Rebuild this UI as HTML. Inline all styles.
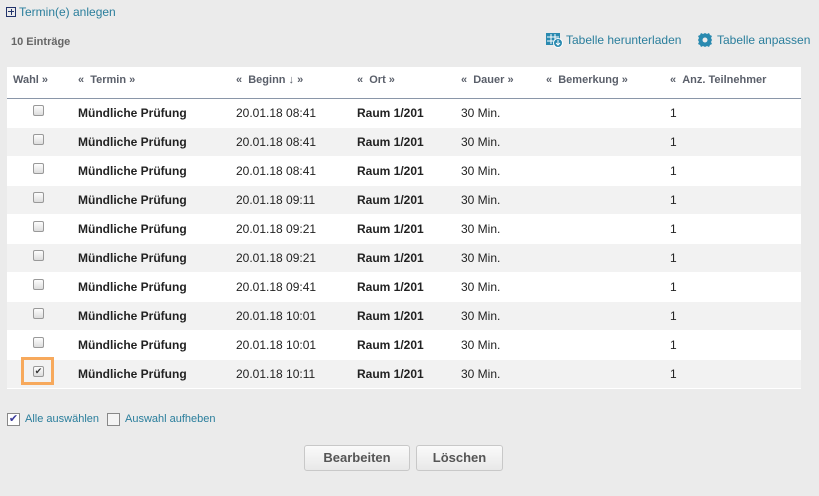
<!DOCTYPE html>
<html><head><meta charset="utf-8"><style>
*{margin:0;padding:0;box-sizing:border-box}
body{width:819px;height:496px;background:#ebebeb;font-family:"Liberation Sans",sans-serif;font-size:12px;color:#222;position:relative;overflow:hidden}
.a{position:absolute;white-space:nowrap}
.link{color:#2a7e9c}
table{position:absolute;left:7px;top:67px;width:794px;border-collapse:collapse;background:#fff;table-layout:fixed}
th{height:31px;text-align:left;font-weight:bold;color:#5a5f6a;font-size:11px;border-bottom:1px solid #8a96a8;padding:0 0 4px 0}
td{height:29px;padding:0;border-bottom:1px solid #fff}
tr.g td{background:#f2f2f2}
.cb{display:inline-block;width:11px;height:11px;border:1px solid #999;border-radius:2px;background:linear-gradient(#fdfdfd,#ddd);vertical-align:middle;position:relative;top:-3px}
.b{font-weight:bold}
.btn{position:absolute;top:445px;height:26px;border:1px solid #c8c8c8;border-radius:3px;background:linear-gradient(#fafafa,#e8e8e8);font-weight:bold;font-size:13px;color:#555;text-align:center;line-height:23px}
</style></head><body>
<div class="a" style="left:6px;top:7px;width:10px;height:10px;border:1px solid #22336b;"></div>
<div class="a" style="left:8px;top:11px;width:6px;height:1px;background:#22336b"></div>
<div class="a" style="left:10.5px;top:9px;width:1px;height:6px;background:#22336b"></div>
<div class="a link" style="left:19px;top:5px">Termin(e) anlegen</div>
<div class="a" style="left:11px;top:36px;font-size:11px;color:#666;font-weight:bold">10 Einträge</div>
<svg class="a" style="left:546px;top:32px" width="17" height="16" viewBox="0 0 17 16"><rect x="0" y="1" width="14" height="12" fill="#2a8ab0"/><path d="M1 5h12M1 9h12M5 2v10M9 2v10" stroke="#fff" stroke-width="1"/><circle cx="12" cy="11" r="4.5" fill="#2a8ab0" stroke="#fff"/><path d="M12 8v5M10 11l2 2 2-2" stroke="#fff" fill="none"/></svg>
<div class="a link" style="left:566px;top:33px">Tabelle herunterladen</div>
<svg class="a" style="left:697px;top:32px" width="16" height="16" viewBox="0 0 16 16"><path d="M8 1l2 1 2-1 1 2 2 1-1 2 1 2-1 2 1 2-2 1-1 2-2-1-2 1-2-1-2 1-1-2-2-1 1-2-1-2 1-2-1-2 2-1 1-2 2 1z" fill="#2a8ab0"/><circle cx="8" cy="8" r="2.5" fill="#ebebeb"/></svg>
<div class="a link" style="left:717px;top:33px">Tabelle anpassen</div>
<table>
<colgroup><col style="width:71px"><col style="width:158px"><col style="width:121px"><col style="width:104px"><col style="width:85px"><col style="width:124px"><col></colgroup>
<tr><th style="padding-left:6px">Wahl »</th><th>« &nbsp;Termin »</th><th>« &nbsp;Beginn ↓ »</th><th>« &nbsp;Ort »</th><th>« &nbsp;Dauer »</th><th>« &nbsp;Bemerkung »</th><th>« &nbsp;Anz. Teilnehmer</th></tr>
<tr><td style="padding-left:26px"><span class="cb"></span></td><td class="b">Mündliche Prüfung</td><td>20.01.18 08:41</td><td class="b">Raum 1/201</td><td>30 Min.</td><td></td><td>1</td></tr>
<tr class="g"><td style="padding-left:26px"><span class="cb"></span></td><td class="b">Mündliche Prüfung</td><td>20.01.18 08:41</td><td class="b">Raum 1/201</td><td>30 Min.</td><td></td><td>1</td></tr>
<tr><td style="padding-left:26px"><span class="cb"></span></td><td class="b">Mündliche Prüfung</td><td>20.01.18 08:41</td><td class="b">Raum 1/201</td><td>30 Min.</td><td></td><td>1</td></tr>
<tr class="g"><td style="padding-left:26px"><span class="cb"></span></td><td class="b">Mündliche Prüfung</td><td>20.01.18 09:11</td><td class="b">Raum 1/201</td><td>30 Min.</td><td></td><td>1</td></tr>
<tr><td style="padding-left:26px"><span class="cb"></span></td><td class="b">Mündliche Prüfung</td><td>20.01.18 09:21</td><td class="b">Raum 1/201</td><td>30 Min.</td><td></td><td>1</td></tr>
<tr class="g"><td style="padding-left:26px"><span class="cb"></span></td><td class="b">Mündliche Prüfung</td><td>20.01.18 09:21</td><td class="b">Raum 1/201</td><td>30 Min.</td><td></td><td>1</td></tr>
<tr><td style="padding-left:26px"><span class="cb"></span></td><td class="b">Mündliche Prüfung</td><td>20.01.18 09:41</td><td class="b">Raum 1/201</td><td>30 Min.</td><td></td><td>1</td></tr>
<tr class="g"><td style="padding-left:26px"><span class="cb"></span></td><td class="b">Mündliche Prüfung</td><td>20.01.18 10:01</td><td class="b">Raum 1/201</td><td>30 Min.</td><td></td><td>1</td></tr>
<tr><td style="padding-left:26px"><span class="cb"></span></td><td class="b">Mündliche Prüfung</td><td>20.01.18 10:01</td><td class="b">Raum 1/201</td><td>30 Min.</td><td></td><td>1</td></tr>
<tr class="g"><td style="padding-left:26px"><span class="cb" style="font-size:9px;line-height:9px;text-align:center;color:#333">✔</span></td><td class="b">Mündliche Prüfung</td><td>20.01.18 10:11</td><td class="b">Raum 1/201</td><td>30 Min.</td><td></td><td>1</td></tr>
</table>
<div class="a" style="left:21px;top:357px;width:33px;height:28px;border:3px solid #f7a95c"></div>
<div class="a" style="left:7px;top:413px;width:13px;height:13px;border:1px solid #888;background:#fff;color:#3a3a9a;font-size:11px;line-height:11px;text-align:center">✔</div>
<div class="a link" style="left:25px;top:413px;font-size:11px">Alle auswählen</div>
<div class="a" style="left:107px;top:413px;width:13px;height:13px;border:1px solid #888;background:#f4f4f4"></div>
<div class="a link" style="left:125px;top:413px;font-size:11px">Auswahl aufheben</div>
<div class="btn" style="left:304px;width:106px">Bearbeiten</div>
<div class="btn" style="left:416px;width:87px">Löschen</div>
</body></html>
